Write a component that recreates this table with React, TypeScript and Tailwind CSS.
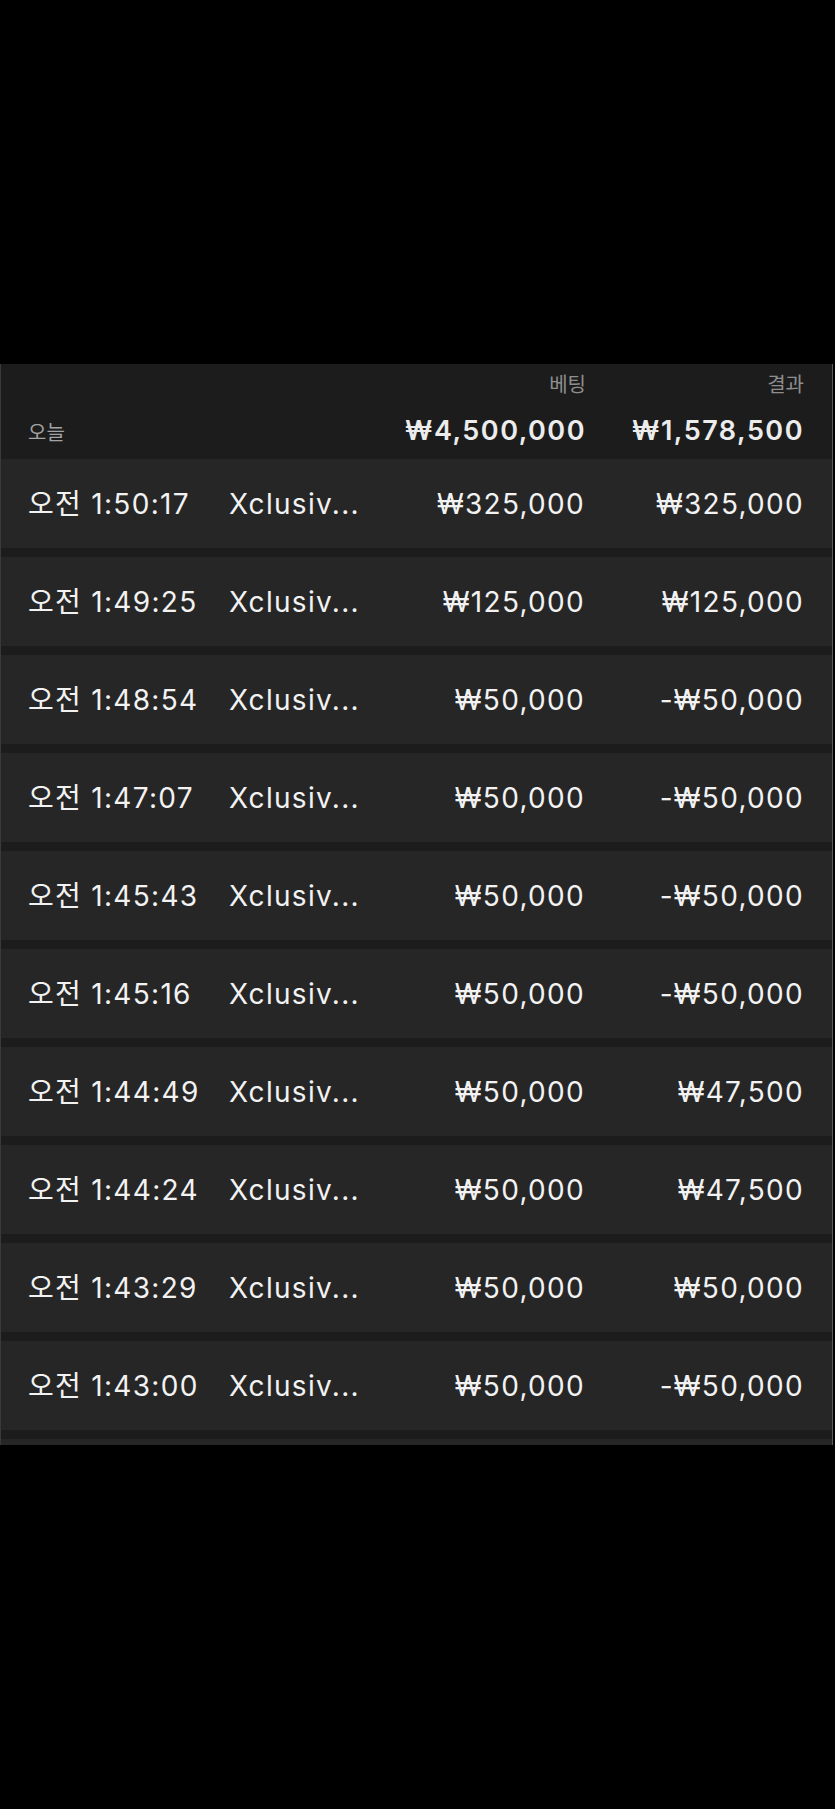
const rows = [
  { time: '오전 1:50:17', game: 'Xclusiv...', bet: '₩325,000', result: '₩325,000' },
  { time: '오전 1:49:25', game: 'Xclusiv...', bet: '₩125,000', result: '₩125,000' },
  { time: '오전 1:48:54', game: 'Xclusiv...', bet: '₩50,000', result: '-₩50,000' },
  { time: '오전 1:47:07', game: 'Xclusiv...', bet: '₩50,000', result: '-₩50,000' },
  { time: '오전 1:45:43', game: 'Xclusiv...', bet: '₩50,000', result: '-₩50,000' },
  { time: '오전 1:45:16', game: 'Xclusiv...', bet: '₩50,000', result: '-₩50,000' },
  { time: '오전 1:44:49', game: 'Xclusiv...', bet: '₩50,000', result: '₩47,500' },
  { time: '오전 1:44:24', game: 'Xclusiv...', bet: '₩50,000', result: '₩47,500' },
  { time: '오전 1:43:29', game: 'Xclusiv...', bet: '₩50,000', result: '₩50,000' },
  { time: '오전 1:43:00', game: 'Xclusiv...', bet: '₩50,000', result: '-₩50,000' },
];

const font = "font-['Inter','Noto_Sans_CJK_KR',sans-serif]";

export default function App() {
  return (
    <div className={`min-h-[1809px] w-[835px] bg-black pt-[364px] ${font}`}>
      {/* Bet history panel */}
      <div className="h-[1081px] w-[833px] overflow-hidden border-l border-r border-l-[#3a3a3a] border-r-[#5a5a5a] bg-[#1c1c1c]">
        {/* Header */}
        <div className="h-[95px] pl-[27px] pr-[28px] pt-[6px]">
          <div className="grid grid-cols-[201px_175px_182px_218px] text-[20px] leading-[30px] text-[#8e8e8e]">
            <div />
            <div />
            <div className="text-right">베팅</div>
            <div className="text-right">결과</div>
          </div>
          <div className="mt-[11px] grid grid-cols-[201px_175px_182px_218px] items-baseline">
            <div className="text-[20px] text-[#a3a3a3]">오늘</div>
            <div />
            <div className="text-right text-[27px] font-semibold tracking-[1.5px] text-[#ececec]">₩4,500,000</div>
            <div className="text-right text-[27px] font-semibold tracking-[1.5px] text-[#ececec]">₩1,578,500</div>
          </div>
        </div>

        {/* Rows */}
        <div className="flex flex-col gap-[9px]">
          {rows.map((row, i) => (
            <div
              key={i}
              className="grid h-[89px] shrink-0 grid-cols-[201px_175px_181px_219px] items-center bg-[#262626] pl-[27px] pr-[28px] text-[28px] tracking-[1.3px] text-[#f2f2f2]"
            >
              <div className="whitespace-nowrap">{row.time}</div>
              <div className="whitespace-nowrap">{row.game}</div>
              <div className="text-right">{row.bet}</div>
              <div className="text-right">{row.result}</div>
            </div>
          ))}
          {/* next row peeking at the bottom edge */}
          <div className="h-[89px] shrink-0 bg-[#262626]" />
        </div>
      </div>
    </div>
  );
}
